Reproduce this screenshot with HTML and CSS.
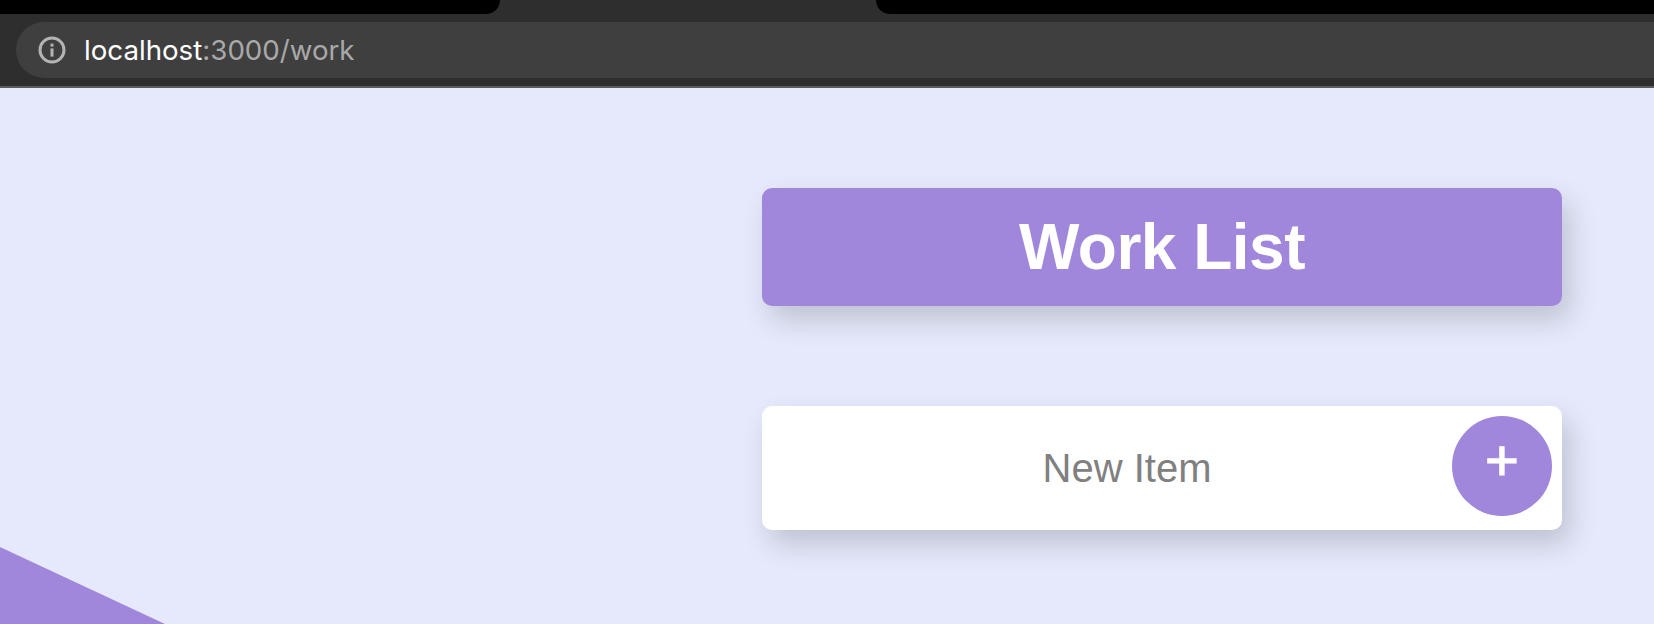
FILE: index.html

```html
<!DOCTYPE html>
<html lang="en">
<head>
  <meta charset="UTF-8">
  <title>Work List</title>
  <link rel="stylesheet" href="styles.css">
</head>
<body>
  <div class="browser-bar">
    <div class="tabs">
      <div class="tab tab-left"></div>
      <div class="tab tab-right"></div>
    </div>
    <div class="toolbar">
      <div class="url-box">
        <svg class="info-icon" width="28" height="28" viewBox="0 0 28 28" fill="none">
          <circle cx="14" cy="14" r="12" stroke="#b4b4b4" stroke-width="3" />
          <rect x="12.5" y="12.4" width="3" height="8.2" fill="#b4b4b4" />
          <rect x="12.5" y="7.6" width="3" height="3" fill="#b4b4b4" />
        </svg>
        <span class="url"><span class="host">localhost</span>:3000/work</span>
      </div>
    </div>
  </div>

  <main class="page">
    <div class="corner-shape"></div>
    <div class="list">
      <div class="heading">
        <h1>Work List</h1>
      </div>
      <form class="item-form">
        <input type="text" placeholder="New Item" />
        <button type="button" class="add-btn">+</button>
      </form>
    </div>
  </main>
</body>
</html>
```

FILE: styles.css

```css
html, body {
  height: 100%;
}

body {
  margin: 0;
  font-family: "Liberation Sans", Arial, sans-serif;
  background: #e5e9fb;
  display: flex;
  flex-direction: column;
  overflow: hidden;
}

.browser-bar {
  background: #2e2e2e;
  border-bottom: 2px solid #5c5c5c;
}

.tabs {
  height: 14px;
  display: flex;
  justify-content: space-between;
}

.tab {
  background: #000;
}

.tab-left {
  width: 500px;
  border-bottom-right-radius: 14px;
}

.tab-right {
  width: 778px;
  border-bottom-left-radius: 14px;
}

.toolbar {
  padding: 8px 0 8px 16px;
}

.url-box {
  height: 56px;
  background: #3f3f3f;
  border-radius: 28px 0 0 28px;
  display: flex;
  align-items: center;
  padding-left: 22px;
  gap: 18px;
}

.url {
  font-family: Inter, sans-serif;
  font-size: 27.7px;
  color: #a9a9a9;
}

.host {
  color: #fff;
}

.page {
  flex: 1;
  position: relative;
  display: flex;
  justify-content: flex-end;
  padding: 100px 92px 0 0;
}

.corner-shape {
  position: absolute;
  left: 0;
  bottom: 0;
  width: 165px;
  height: 77px;
  background: #a087dc;
  clip-path: polygon(0 0, 100% 100%, 0 100%);
}

.list {
  width: 800px;
}

.heading {
  height: 118px;
  background: #a087dc;
  border-radius: 10px;
  box-shadow: 8px 14px 28px rgba(0, 0, 0, 0.17);
  display: flex;
  align-items: center;
  justify-content: center;
}

.heading h1 {
  margin: 0;
  color: #fff;
  font-size: 64px;
  font-weight: bold;
  letter-spacing: -0.5px;
}

.item-form {
  position: relative;
  height: 124px;
  margin-top: 100px;
  background: #fff;
  border-radius: 10px;
  box-shadow: 8px 14px 28px rgba(0, 0, 0, 0.17);
}

.item-form input {
  box-sizing: border-box;
  width: 730px;
  height: 100%;
  padding: 0;
  border: none;
  outline: none;
  background: transparent;
  text-align: center;
  font-family: inherit;
  font-size: 40px;
}

.item-form input::placeholder {
  color: #808080;
}

.add-btn {
  position: absolute;
  top: 10px;
  right: 10px;
  width: 100px;
  height: 100px;
  padding: 0 0 12px;
  border: none;
  border-radius: 50%;
  background: #a087dc;
  color: #fff;
  font-family: inherit;
  font-size: 58px;
  line-height: 1;
  -webkit-text-stroke: 1.2px #fff;
}
```
